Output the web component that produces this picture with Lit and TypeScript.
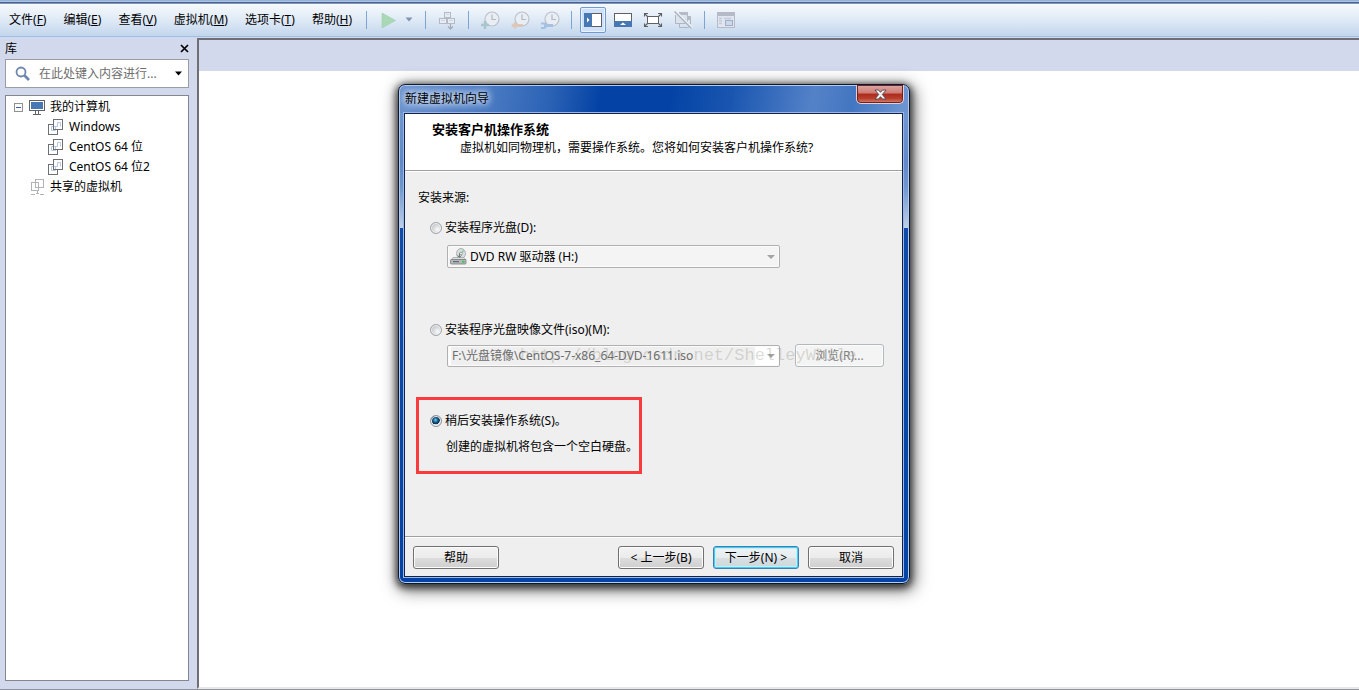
import { LitElement, html, svg, css } from "lit";
import { customElement, property, state } from "lit/decorators.js";

const clock = svg`
  <circle cx="11" cy="8" r="7" fill="#e9edf4" stroke="#bcc1ca" stroke-width="1.200"/>
  <path d="M11 3.500V8.500H15" fill="none" stroke="#b3bac5" stroke-width="1.200"/>`;

const icons: Record<string, unknown> = {
  play: svg`<path d="M3 2L16.500 9.500L3 17Z" fill="#a9d8b4" stroke="#9fd0ad" stroke-width=".6"/>`,
  network: svg`
    <g fill="#e8ecf3" stroke="#b4bac5">
      <rect x="6.500" y="1.500" width="6" height="5"/>
      <rect x="1.500" y="7.500" width="7" height="5"/>
      <rect x="9.500" y="7.500" width="7" height="5"/>
    </g>
    <path d="M8 3.500h3M3 9.500h4M11 9.500h4" stroke="#cdd5e2"/>
    <path d="M12.500 13v5M10 15.500l2.500 2.500l2.500-2.500" fill="none" stroke="#a7adb8" stroke-width="1.300"/>`,
  clockAdd: svg`${clock}<path d="M4 10v8M0 14h8" stroke="#a9c6cb" stroke-width="2.500"/>`,
  clockBack: svg`${clock}<path d="M0 14.500L5 10.500V13H12V16H5V18.500Z" fill="#dcc7b8"/>`,
  clockWrench: svg`${clock}<path d="M0 11.500h4l2 1.500h6v3H6l-2 2H0v-2h3v-2.500H0Z" fill="#a5c0e2"/>`,
  sidebar: svg`
    <rect x=".5" y="2.500" width="17" height="13" fill="#fff" stroke="#5f6165"/>
    <rect x="0" y="2" width="8" height="14" fill="#4778b3"/>
    <path d="M3 6.500L5.500 9L3 11.500Z" fill="#fff"/>`,
  bottom: svg`
    <rect x=".5" y="2.500" width="17" height="13" fill="#fff" stroke="#5f6165"/>
    <rect x="0" y="10" width="18" height="6" fill="#4778b3"/>
    <path d="M6 14L9 11.500L12 14Z" fill="#fff"/>`,
  full: svg`
    <rect x="3.500" y="5.500" width="11" height="7" fill="#fff" stroke="#5f6165"/>
    <path d="M.5 5.500V2.500H4M14 2.500H17.500V5.500M17.500 12.500V15.500H14M4 15.500H.5V12.500M1 3l2.500 2.500M17 3l-2.500 2.500M17 15l-2.500-2.500M1 15l2.500-2.500" fill="none" stroke="#5f6165" stroke-width="1.100"/>`,
  unity: svg`
    <rect x="5.500" y="1.500" width="8" height="9" fill="#dde4ef" stroke="#b0b6c1"/>
    <rect x="5" y="1" width="9" height="3" fill="#b5bbc6"/>
    <path d="M13 5h4v4h-4z" fill="#b5bbc6"/>
    <path d="M5.500 12v4.500H14.500V12M16.500 8v5H13" fill="none" stroke="#b0b6c1"/>
    <path d="M1.500 4V12.500H11.500V8" fill="#dbe3ef" stroke="#b0b6c1"/>
    <path d="M1 0L18 17" stroke="#eef2f8" stroke-width="2.500"/>
    <path d="M.5 .5L17.500 17.500" stroke="#a7aebb" stroke-width="1.200"/>`,
  thumbs: svg`
    <rect x=".5" y="1.500" width="17" height="15" fill="#dfe6f1" stroke="#b5bbc6"/>
    <rect x="0" y="1" width="18" height="4" fill="#b5bbc6"/>
    <path d="M2 7.500h3M2 10h3M2 12.500h3M7 7.500h7" stroke="#c3cad6" stroke-width="1.300"/>
    <rect x="8.500" y="9.500" width="7" height="5" fill="#c9d9ee" stroke="#a3adbd"/>`,
};

@customElement("tool-button")
class ToolButton extends LitElement {
  @property() icon = "";
  @property() label = "";
  @property({ type: Boolean }) pressed = false;
  @property({ type: Boolean }) disabled = false;

  static styles = css`
    :host { display: block; }
    button {
      display: grid;
      place-items: center;
      width: 26px;
      height: 26px;
      margin: 0 2px;
      padding: 0;
      border: 1px solid transparent;
      border-radius: 2px;
      background: none;
    }
    .pressed {
      border: 1px solid #6f9bd1;
      background: #cfe1f8;
      box-shadow: inset 0 0 0 1px #eaf3ff;
    }
  `;

  render() {
    return html`<button class=${this.pressed ? "pressed" : ""} aria-label=${this.label}
      ?disabled=${this.disabled}>
      <svg width="18" height="18" viewBox="0 0 18 18" overflow="visible">${icons[this.icon]}</svg>
    </button>`;
  }
}

const vmIcon = html`<svg width="16" height="16" viewBox="0 0 16 16" fill="none">
  <rect x=".5" y="5.500" width="9" height="10" fill="#fff" stroke="#6d6f73"/>
  <rect x="5.500" y=".5" width="9" height="10" fill="#fff" stroke="#6d6f73"/>
  <path d="M9.500 3.500H12.500V7.500M9.500 3.500V7.500H3.500V11.500H7.500V8" stroke="#b5cae8"/>
  <path d="M5.500 10.500V5.500M5.500 10.500H9.500" stroke="#6d6f73"/>
</svg>`;

@customElement("library-panel")
class LibraryPanel extends LitElement {
  static styles = css`
    :host {
      display: flex;
      flex-direction: column;
      box-sizing: border-box;
      padding: 0 8px 8px 5px;
      background: #d3d9ed;
      font: 12px/20px "Noto Sans", "Noto Sans CJK SC", sans-serif;
      color: #000;
    }
    .head {
      display: flex;
      justify-content: space-between;
      align-items: center;
      height: 21px;
    }
    .head h2 { margin: 0; font: inherit; }
    .head button { display: flex; padding: 0; border: 0; background: none; }
    .search {
      display: flex;
      align-items: center;
      height: 27px;
      padding: 0 5px 0 9px;
      border: 1px solid #9a9da3;
      background: #fff;
    }
    .search input {
      flex: 1;
      min-width: 0;
      margin: 0 0 0 8px;
      padding: 0;
      border: 0;
      outline: 0;
      background: none;
      font: inherit;
    }
    .search input::placeholder { color: #6d6d6d; opacity: 1; }
    .tree {
      flex: 1;
      margin: 7px 0 0;
      padding: 1px 0 0;
      border: 1px solid #82868f;
      background: #fff;
      list-style: none;
    }
    .tree ul { margin: 0; padding: 0; list-style: none; }
    .row { display: flex; align-items: center; height: 20px; padding-left: 8px; }
    .row span { margin-left: 5px; }
    .root svg:nth-of-type(2) { margin-left: 6px; }
    .child { padding-left: 42px; }
    .shared { padding-left: 24px; }
  `;

  render() {
    return html`
      <div class="head">
        <h2>库</h2>
        <button aria-label="关闭库"><svg width="9" height="9" viewBox="0 0 9 9">
          <path d="M1 1L8 8M8 1L1 8" stroke="#000" stroke-width="1.700"/></svg></button>
      </div>
      <div class="search">
        <svg width="16" height="16" viewBox="0 0 16 16" fill="none" stroke="#6c86b0">
          <circle cx="6" cy="6" r="4.500" stroke-width="1.800"/>
          <path d="M9.500 9.500L14 14" stroke-width="2.600"/></svg>
        <input type="text" aria-label="搜索" placeholder="在此处键入内容进行..." />
        <svg width="9" height="5" viewBox="0 0 9 5"><path d="M1 .5H8L4.500 4.500Z"/></svg>
      </div>
      <ul class="tree">
        <li>
          <div class="row root">
            <svg width="9" height="9" viewBox="0 0 9 9"><rect x=".5" y=".5" width="8" height="8" fill="#fbfbfb" stroke="#919191"/>
              <path d="M2 4.500h5" stroke="#3c5fa5"/></svg>
            <svg width="16" height="15" viewBox="0 0 16 15"><rect x=".5" y=".5" width="15" height="10" fill="#fff" stroke="#5f6165"/>
              <rect x="2" y="2" width="12" height="7" fill="#4778b3"/><path d="M6.500 11v3M9.500 11v3M4 14.500h8" stroke="#5f6165"/></svg>
            <span>我的计算机</span>
          </div>
          <ul>
            ${["Windows", "CentOS 64 位", "CentOS 64 位2"].map(
              (name) => html`<li class="row child">${vmIcon}<span>${name}</span></li>`
            )}
          </ul>
        </li>
        <li class="row shared">
          <svg width="15" height="16" viewBox="0 0 15 16" fill="none" stroke="#b1b3b8">
            <rect x="1.500" y="3.500" width="7" height="8" fill="#fff"/>
            <rect x="5.500" y=".5" width="8" height="8" fill="#fff"/>
            <path d="M5.500 3.500H8.500V8.500M7.500 12v3M1 15.500h4M6 14.500h3M10 15.500h4"/></svg>
          <span>共享的虚拟机</span>
        </li>
      </ul>`;
  }
}

const comboArrow = html`<svg width="8" height="4" viewBox="0 0 8 4"><path d="M0 0H8L4 4Z" fill="#a3a3a3"/></svg>`;

@customElement("vm-wizard")
class VmWizard extends LitElement {
  @state() source = "later";

  static styles = css`
    :host {
      display: block;
      box-sizing: border-box;
      width: 512px;
      padding: 0 6px 6px 5px;
      border: 1px solid #0b1830;
      border-radius: 7px;
      background:
        linear-gradient(#6f97d2 0, #5f89c9 50px, #6f97d0 75px, #c0d0ea 115px) 0 28px / 6px 115px no-repeat,
        linear-gradient(#6f97d2 0, #5f89c9 50px, #6f97d0 75px, #c0d0ea 115px) 100% 28px / 7px 115px no-repeat,
        linear-gradient(100deg, #6c93ce 0, #4a7ac2 90px, #2c63b5 150px, #0443a5 200px, #0443a5 270px, #1a56b0 330px, #5482c8 410px, #4376c1 450px, #6b94d0 500px) 0 0 / 100% 28px no-repeat,
        linear-gradient(#1450ac, #0443a5);
      box-shadow: inset 0 0 0 1px #b5cbea, 0 2px 7px 2px rgba(0, 0, 0, 0.65), 2px 4px 16px 3px rgba(0, 0, 0, 0.5);
      font: 12px/18px "Noto Sans", "Noto Sans CJK SC", sans-serif;
      color: #000;
    }
    .titlebar {
      display: flex;
      justify-content: space-between;
      align-items: flex-start;
      height: 28px;
    }
    .titlebar h1 {
      margin: 0;
      padding: 5px 4px 0 1px;
      font: inherit;
      text-shadow: 0 0 8px #dfeafb, 0 0 8px #dfeafb, 0 0 6px #c5d7f2;
    }
    .close {
      display: grid;
      place-items: center;
      width: 48px;
      height: 19px;
      margin-right: -1px;
      padding: 0;
      border: 1px solid #e9cfd4;
      border-top: 0;
      border-radius: 0 0 5px 5px;
      outline: 0;
      background: linear-gradient(#dfa9a4 0, #cd7a74 45%, #ad2a1c 50%, #b8402c 75%, #d98775 100%);
      box-shadow: inset 0 0 0 1px #66252b;
    }
    .client {
      border: 1px solid #0e2350;
      box-shadow: 0 0 0 1px #9db8e2;
      background: #efefef;
    }
    .intro {
      padding: 6px 27px 13px;
      border-bottom: 1px solid #a0a0a0;
      background: #fff;
    }
    .intro h2 { margin: 0; font: bold 13px/18px "Noto Sans", "Noto Sans CJK SC", sans-serif; }
    .intro p { margin: 1px 0 0 28px; }
    fieldset {
      margin: 0;
      padding: 17px 13px 62px 11px;
      border: 0;
      border-top: 1px solid #fff;
    }
    .caption { margin: 0 0 12px 2px; }
    .option { display: flex; align-items: center; gap: 3px; }
    .outer { margin-left: 14px; }
    .option input {
      appearance: none;
      width: 12px;
      height: 12px;
      margin: 0;
      border: 1px solid #a0a4a9;
      border-radius: 50%;
      background: radial-gradient(circle at 65% 65%, #f4f4f4 10%, #b9bcc0 80%);
      box-shadow: inset 0 0 0 1px #f4f4f4;
    }
    .option input:checked {
      border-color: #8c9299;
      background: radial-gradient(circle at 45% 40%, #7fd0f4 0, #1a6796 25%, #0c2c4a 50%, #d6dde3 56%);
    }
    .line { display: flex; gap: 15px; align-items: flex-end; margin-left: 31px; }
    .combo {
      display: flex;
      align-items: center;
      box-sizing: border-box;
      width: 333px;
      height: 23px;
      padding: 0 4px 0 3px;
      border: 1px solid #b0b0b0;
      border-radius: 2px;
      background: #f4f4f4;
      box-shadow: inset 0 0 0 1px #fbfbfb;
    }
    .combo select, .combo input {
      appearance: none;
      flex: 1;
      min-width: 0;
      height: 18px;
      margin: 0 12px 0 3px;
      padding: 0;
      border: 0;
      background: none;
      font: inherit;
      color: #000;
      opacity: 1;
    }
    .drive { margin: 8px 0 53px 31px; padding-left: 2px; }
    .combo.iso { height: 22px; background: #fff; }
    .combo.iso input { margin-left: 0; padding-left: 1px; background: #efefef; color: #6d6d6d; }
    .image { margin-top: 5px; }
    .marked {
      box-sizing: border-box;
      width: fit-content;
      margin-top: 30px;
      padding: 12px 1px 15px 11px;
      border: 3px solid #fb3a3e;
    }
    .marked p { margin: 8px 0 0 16px; }
    .button {
      box-sizing: border-box;
      width: 86px;
      height: 23px;
      padding: 0;
      border: 1px solid #707070;
      border-radius: 3px;
      background: linear-gradient(#f3f3f3 0, #ebebeb 50%, #dddddd 51%, #cfcfcf 100%);
      box-shadow: inset 0 0 0 1px #fcfcfc;
      font: inherit;
      color: #000;
    }
    .browse { width: 89px; border-color: #b3b8bb; background: #f4f4f4; color: #838383; }
    .default { border-color: #3c7fb1; box-shadow: inset 0 0 0 1px #42cdf3, inset 0 0 0 2px #c8eefa; background: linear-gradient(#eef3f5 0, #e5ecef 50%, #d8e0e4 51%, #cdd6da 100%); }
    footer {
      display: flex;
      gap: 9px;
      padding: 9px 8px 7px 8px;
      border-top: 1px solid #a0a0a0;
      box-shadow: inset 0 1px 0 #fff;
    }
    .help { margin-right: auto; }
  `;

  render() {
    const radio = (id: string) => html`<input type="radio" name="source" id=${id}
      .checked=${this.source === id} @change=${() => (this.source = id)} />`;
    return html`
      <div class="titlebar">
        <h1>新建虚拟机向导</h1>
        <button class="close" aria-label="关闭"><svg width="13" height="11" viewBox="0 0 13 11">
          <path d="M1 1H4.500L6.500 3.300L8.500 1H12L8.300 5.500L12 10H8.500L6.500 7.700L4.500 10H1L4.700 5.500Z" fill="#f5f5f7" stroke="#4d4550" stroke-width=".9"/></svg></button>
      </div>
      <div class="client">
        <div class="intro">
          <h2>安装客户机操作系统</h2>
          <p>虚拟机如同物理机，需要操作系统。您将如何安装客户机操作系统?</p>
        </div>
        <fieldset>
          <div class="caption">安装来源:</div>
          <div class="option outer">${radio("disc")}<label for="disc">安装程序光盘(D):</label></div>
          <div class="combo drive">
            <svg width="17" height="17" viewBox="0 0 17 17">
              <ellipse cx="11" cy="5.500" rx="4.500" ry="5" fill="#d9dddf" stroke="#a0a4a7" stroke-width=".8"/>
              <path d="M11 5.500L14 2M11 5.500L8 9" stroke="#8fd09c" stroke-width="1.500"/>
              <circle cx="11" cy="5.500" r="1.300" fill="#fff" stroke="#8a8a8a" stroke-width=".8"/>
              <path d="M3 9.500H14L16 12H1Z" fill="#dcdedf" stroke="#a0a4a7" stroke-width=".8"/>
              <path d="M9.500 5v4.500M7.500 7.500l2 2l2-2" fill="none" stroke="#7b8084"/>
              <rect x=".5" y="11.500" width="15.500" height="4.500" rx="1" fill="#b5b9bb" stroke="#777b7e" stroke-width=".8"/>
              <path d="M3 13.700h6" stroke="#55595c"/><rect x="12" y="12.700" width="2.500" height="2" fill="#43c84d"/></svg>
            <select aria-label="安装程序光盘" disabled><option>DVD RW 驱动器 (H:)</option></select>${comboArrow}
          </div>
          <div class="option outer">${radio("iso")}<label for="iso">安装程序光盘映像文件(iso)(M):</label></div>
          <div class="line image">
            <div class="combo iso">
              <input type="text" aria-label="映像文件" disabled .value=${"F:\\光盘镜像\\CentOS-7-x86_64-DVD-1611.iso"} />${comboArrow}
            </div>
            <button class="button browse" disabled>浏览(R)...</button>
          </div>
          <div class="marked">
            <div class="option">${radio("later")}<label for="later">稍后安装操作系统(S)。</label></div>
            <p>创建的虚拟机将包含一个空白硬盘。</p>
          </div>
        </fieldset>
        <footer>
          <button class="button help">帮助</button>
          <button class="button">&lt; 上一步(B)</button>
          <button class="button default">下一步(N) &gt;</button>
          <button class="button">取消</button>
        </footer>
      </div>`;
  }
}

const menus = [
  ["文件", "F"], ["编辑", "E"], ["查看", "V"],
  ["虚拟机", "M"], ["选项卡", "T"], ["帮助", "H"],
];

@customElement("app-root")
class AppRoot extends LitElement {
  static styles = css`
    :host {
      position: relative;
      display: flex;
      flex-direction: column;
      box-sizing: border-box;
      height: 100vh;
      overflow: hidden;
      border-bottom: 1px solid #8f9298;
      background: #d3d9ed;
      font: 12px/20px "Noto Sans", "Noto Sans CJK SC", sans-serif;
      color: #000;
    }
    .bar {
      display: flex;
      align-items: center;
      height: 33px;
      border-top: 1px solid #46608f;
      border-bottom: 1px solid #9dbde3;
      box-shadow: inset 0 1px 0 #7f97bd;
      background: linear-gradient(#f8fafd, #e2ecf7 45%, #c3d6ed);
    }
    .edge { height: 2px; background: linear-gradient(#8ba8d3, #b9cdea); }
    nav { display: flex; gap: 17px; box-sizing: border-box; min-width: 360px; padding-left: 9px; }
    nav button { padding: 0; border: 0; background: none; font: inherit; color: inherit; }
    .sep { flex: none; width: 1px; height: 18px; margin: 0 6px; background: #7fa3d2; }
    .drop { display: flex; justify-content: center; width: 12px; margin-right: 4px; padding: 0; border: 0; background: none; }
    .work { display: flex; flex: 1; min-height: 0; padding-top: 1px; }
    library-panel { flex: none; width: 197px; }
    main {
      flex: 1;
      border-left: 2px solid #6e6f74;
      border-top: 2px solid #6e6f74;
      border-bottom: 2px solid #e8e8e8;
      background: #fff;
    }
    .tabs { height: 31px; background: #d3d9ed; }
    vm-wizard { position: absolute; left: 398px; top: 84px; }
    .watermark {
      position: absolute;
      left: 520px;
      top: 344px;
      font: 17px/24px "Liberation Mono", monospace;
      color: rgba(130, 130, 115, 0.28);
      pointer-events: none;
    }
  `;

  render() {
    const sep = html`<span class="sep"></span>`;
    return html`
      <div class="edge"></div>
      <header class="bar">
        <nav>${menus.map(([name, key]) => html`<button>${name}(<u>${key}</u>)</button>`)}</nav>
        ${sep}
        <tool-button icon="play" label="开机" disabled></tool-button>
        <button class="drop" aria-label="电源选项"><svg width="8" height="5" viewBox="0 0 8 5"><path d="M.5 .5H7.500L4 4.500Z" fill="#8492b5"/></svg></button>
        ${sep}
        <tool-button icon="network" label="发送" disabled></tool-button>
        ${sep}
        <tool-button icon="clockAdd" label="拍摄快照" disabled></tool-button>
        <tool-button icon="clockBack" label="恢复快照" disabled></tool-button>
        <tool-button icon="clockWrench" label="管理快照" disabled></tool-button>
        ${sep}
        <tool-button icon="sidebar" label="显示库" pressed></tool-button>
        <tool-button icon="bottom" label="显示缩略图栏"></tool-button>
        <tool-button icon="full" label="全屏"></tool-button>
        <tool-button icon="unity" label="Unity" disabled></tool-button>
        ${sep}
        <tool-button icon="thumbs" label="控制台视图" disabled></tool-button>
      </header>
      <div class="work">
        <library-panel></library-panel>
        <main><div class="tabs"></div></main>
      </div>
      <vm-wizard></vm-wizard>
      <div class="watermark">http://blog.csdn.net/ShelleyWhile</div>`;
  }
}
